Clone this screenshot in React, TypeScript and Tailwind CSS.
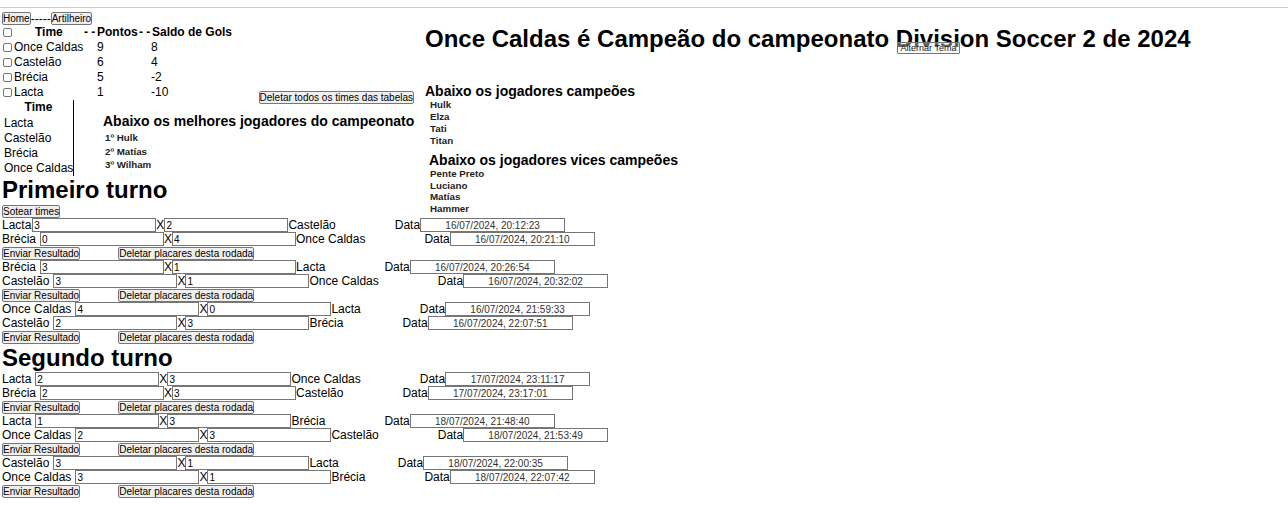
const font = "font-['Liberation_Sans',Arial,sans-serif]";
const btn = "block shrink-0 h-[13px] rounded-[2px] border border-[#767676] bg-[#efefef] text-[10px] leading-[11px] text-black whitespace-nowrap";

type Jogo = {
  casa: string;
  gap: boolean;
  g1: string;
  g2: string;
  fora: string;
  data: string;
};

const classificacao = [
  ["Once Caldas", "9", "8"],
  ["Castelão", "6", "4"],
  ["Brécia", "5", "-2"],
  ["Lacta", "1", "-10"],
];

const primeiroTurno: Jogo[][] = [
  [
    { casa: "Lacta", gap: false, g1: "3", g2: "2", fora: "Castelão", data: "16/07/2024, 20:12:23" },
    { casa: "Brécia", gap: true, g1: "0", g2: "4", fora: "Once Caldas", data: "16/07/2024, 20:21:10" },
  ],
  [
    { casa: "Brécia", gap: true, g1: "3", g2: "1", fora: "Lacta", data: "16/07/2024, 20:26:54" },
    { casa: "Castelão", gap: true, g1: "3", g2: "1", fora: "Once Caldas", data: "16/07/2024, 20:32:02" },
  ],
  [
    { casa: "Once Caldas", gap: true, g1: "4", g2: "0", fora: "Lacta", data: "16/07/2024, 21:59:33" },
    { casa: "Castelão", gap: true, g1: "2", g2: "3", fora: "Brécia", data: "16/07/2024, 22:07:51" },
  ],
];

const segundoTurno: Jogo[][] = [
  [
    { casa: "Lacta", gap: true, g1: "2", g2: "3", fora: "Once Caldas", data: "17/07/2024, 23:11:17" },
    { casa: "Brécia", gap: true, g1: "2", g2: "3", fora: "Castelão", data: "17/07/2024, 23:17:01" },
  ],
  [
    { casa: "Lacta", gap: true, g1: "1", g2: "3", fora: "Brécia", data: "18/07/2024, 21:48:40" },
    { casa: "Once Caldas", gap: true, g1: "2", g2: "3", fora: "Castelão", data: "18/07/2024, 21:53:49" },
  ],
  [
    { casa: "Castelão", gap: true, g1: "3", g2: "1", fora: "Lacta", data: "18/07/2024, 22:00:35" },
    { casa: "Once Caldas", gap: true, g1: "3", g2: "1", fora: "Brécia", data: "18/07/2024, 22:07:42" },
  ],
];

function Check() {
  return <span className="-mt-[1px] ml-[1px] block h-[9px] w-[9px] shrink-0 rounded-[2px] border border-[#767676] bg-white" />;
}

function Placar({ valor }: { valor: string }) {
  return (
    <span className="block h-[14px] w-[124px] shrink-0 border border-[#767676] bg-white pl-[1px] text-[10px] leading-[13px] text-black">
      {valor}
    </span>
  );
}

function Linha({ jogo }: { jogo: Jogo }) {
  return (
    <div className="flex h-[14px] items-center text-[12px] leading-[14px] whitespace-nowrap">
      <span className={jogo.gap ? "mr-[4px]" : "mr-[1px]"}>{jogo.casa}</span>
      <Placar valor={jogo.g1} />
      <span>X</span>
      <Placar valor={jogo.g2} />
      <span>{jogo.fora}</span>
      <span className="ml-[59px]">Data</span>
      <span className="-mt-[1px] block h-[14px] w-[145px] shrink-0 border border-[#767676] bg-white text-center text-[10px] leading-[13px] text-[#333]">
        {jogo.data}
      </span>
    </div>
  );
}

function Rodada({ jogos }: { jogos: Jogo[] }) {
  return (
    <div>
      {jogos.map((j) => (
        <Linha key={j.data} jogo={j} />
      ))}
      <div className="flex h-[14px] gap-[38px] pt-[1px]">
        <button className={btn}>Enviar Resultado</button>
        <button className={btn}>Deletar placares desta rodada</button>
      </div>
    </div>
  );
}

export default function App() {
  return (
    <div className={`${font} relative h-[511px] overflow-hidden bg-white text-black`}>
      <hr className="mt-[7px] border-t border-[#ccc]" />
      <div className="flex">
        <div className="w-[425px] shrink-0 pl-[2px]">
          <div className="mt-[4px] flex h-[13px] items-center text-[12px]">
            <button className={btn}>Home</button>
            <span>-----</span>
            <button className={btn}>Artilheiro</button>
          </div>

          <div className="text-[12px] leading-[15px]">
            <div className="flex h-[15px] items-center font-bold">
              <Check />
              <span className="w-[72px] pl-[23px]">Time</span>
              <span className="w-[13px]">- -</span>
              <span className="w-[42px]">Pontos</span>
              <span className="w-[13px]">- -</span>
              <span>Saldo de Gols</span>
            </div>
            {classificacao.map(([time, pontos, saldo]) => (
              <div key={time} className="flex h-[15px] items-center">
                <Check />
                <span className="ml-[2px] w-[83px]">{time}</span>
                <span className="w-[54px]">{pontos}</span>
                <span>{saldo}</span>
              </div>
            ))}
          </div>
          <div className="-mt-[9px] -mb-[4px] flex justify-end pr-[11px]">
            <button className={btn}>Deletar todos os times das tabelas</button>
          </div>

          <div className="flex">
            <div className="h-[76px] w-[72px] border-r border-black pl-[2px] text-[12px] leading-[15px] whitespace-nowrap">
              <div className="h-[16px] text-center font-bold">Time</div>
              <div>Lacta</div>
              <div>Castelão</div>
              <div>Brécia</div>
              <div>Once Caldas</div>
            </div>
            <div className="ml-[29px] pt-[13px]">
              <h3 className="text-[14px] font-bold leading-[16px] whitespace-nowrap">
                Abaixo os melhores jogadores do campeonato
              </h3>
              <div className="mt-[2px] pl-[2px] text-[9.75px] font-bold leading-[13.5px] text-[#222]">
                <div>1º Hulk</div>
                <div>2º Matías</div>
                <div>3º Wilham</div>
              </div>
            </div>
          </div>

          <h1 className="h-[27px] text-[24px] font-bold leading-[27px]">Primeiro turno</h1>
          <button className={`${btn} mt-[2px]`}>Sotear times</button>
        </div>

        <div className="relative flex-1">
          <h1 className="mt-[17px] text-[24px] font-bold leading-[28px] whitespace-nowrap">
            Once Caldas é Campeão do campeonato Division Soccer 2 de 2024
          </h1>
          <button className="absolute left-[472px] top-[34px] h-[12px] w-[63px] rounded-[1px] border border-[#767676] bg-[#efefef]/40 text-[9px] leading-[10px] text-[#222] whitespace-nowrap">
            Alternar Tema
          </button>
          <h3 className="mt-[30px] text-[14px] font-bold leading-[16px]">Abaixo os jogadores campeões</h3>
          <div className="pl-[5px] text-[9.75px] font-bold leading-[12px] text-[#222]">
            <div>Hulk</div>
            <div>Elza</div>
            <div>Tati</div>
            <div>Titan</div>
          </div>
          <h3 className="mt-[5px] pl-[4px] text-[14px] font-bold leading-[16px]">Abaixo os jogadores vices campeões</h3>
          <div className="pl-[5px] text-[9.75px] font-bold leading-[11.7px] text-[#222]">
            <div>Pente Preto</div>
            <div>Luciano</div>
            <div>Matías</div>
            <div>Hammer</div>
          </div>
        </div>
      </div>

      <div className="pl-[2px]">
        {primeiroTurno.map((jogos) => (
          <Rodada key={jogos[0].data} jogos={jogos} />
        ))}
        <h1 className="h-[28px] text-[24px] font-bold leading-[28px]">Segundo turno</h1>
        {segundoTurno.map((jogos) => (
          <Rodada key={jogos[0].data} jogos={jogos} />
        ))}
      </div>
    </div>
  );
}
